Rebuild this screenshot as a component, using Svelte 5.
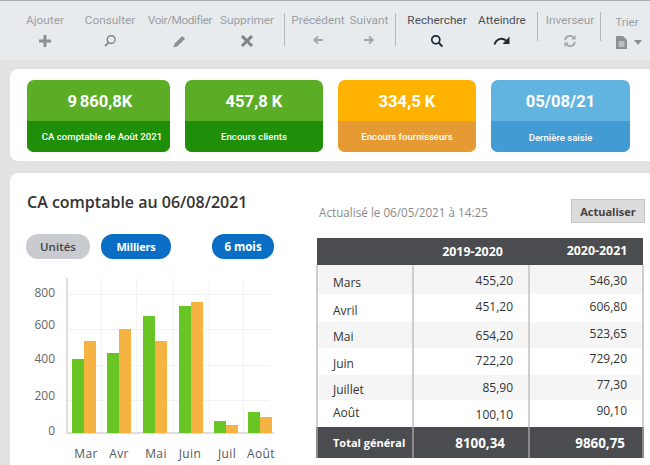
<script>
  const kpis = [
    { value: '9 860,8K', label: 'CA comptable de Août 2021', tone: 'green first' },
    { value: '457,8 K', label: 'Encours clients', tone: 'green' },
    { value: '334,5 K', label: 'Encours fournisseurs', tone: 'orange' },
    { value: '05/08/21', label: 'Dernière saisie', tone: 'blue' }
  ];
  // d = vertical drift of each cell's text within its row, in px
  const rows = [
    { c: ['Mars', '455,20', '546,30'], d: [3, 1, 1] },
    { c: ['Avril', '451,20', '606,80'], d: [2, -2, -2] },
    { c: ['Mai', '654,20', '523,65'], d: [1, 0, -2] },
    { c: ['Juin', '722,20', '729,20'], d: [1.5, -1.5, -3.5] },
    { c: ['Juillet', '85,90', '77,30'], d: [1.5, -0.5, -3.5] },
    { c: ['Août', '100,10', '90,10'], d: [-1.5, 0.5, -3.5] }
  ];
  const drift = (d) => (d >= 0 ? `padding-top:${d * 2}px` : `padding-bottom:${-d * 2}px`);
  const yAxis = [
    { t: '800', y: 294, ly: 297 }, { t: '600', y: 329, ly: 329 }, { t: '400', y: 365, ly: 363 }, { t: '200', y: 400, ly: 400 }, { t: '0', y: 433, ly: 435 }
  ];
  const vGrid = [101, 136, 173, 209, 243];
  const base = 433;
  const bars = [
    { m: 'Mar', lx: 86, x: 72, a: 359, b: 341 },
    { m: 'Avr', lx: 119, x: 107, a: 353, b: 329 },
    { m: 'Mai', lx: 156, x: 143, a: 316, b: 341 },
    { m: 'Juin', lx: 190, x: 179, a: 306, b: 302 },
    { m: 'Juil', lx: 227, x: 214, a: 421, b: 425 },
    { m: 'Août', lx: 261, x: 248, a: 412, b: 417 }
  ];
</script>

<div class="page">
  <header class="toolbar">
    <div class="tool off"><span>Ajouter</span>
      <svg viewBox="0 0 14 14" width="14" height="14"><path d="M7 1v12M1 7h12" stroke="#8b9094" stroke-width="3"/></svg></div>
    <div class="tool off"><span>Consulter</span>
      <svg viewBox="0 0 14 14" width="14" height="14"><circle cx="8.2" cy="5.6" r="3.9" fill="none" stroke="#7e8388" stroke-width="1.4"/><path d="M5.4 8.6L2 12.2" stroke="#7e8388" stroke-width="1.8"/></svg></div>
    <div class="tool off narrow"><span>Voir/Modifier</span>
      <svg viewBox="0 0 14 14" width="14" height="14"><path d="M0.5 13.5l1.2-4 7.6-7.6 2.8 2.8-7.6 7.6z" fill="#8b9094"/></svg></div>
    <div class="tool off"><span>Supprimer</span>
      <svg viewBox="0 0 14 14" width="14" height="14"><path d="M2 2l10 10M12 2L2 12" stroke="#7e8388" stroke-width="3"/></svg></div>
    <i class="sep tall"></i>
    <div class="tool off"><span>Précédent</span>
      <svg viewBox="0 0 12 12" width="12" height="12"><path d="M11 6H3.5M6 2.5L2.2 6 6 9.5" fill="none" stroke="#a2a6aa" stroke-width="1.8"/></svg></div>
    <div class="tool off"><span>Suivant</span>
      <svg viewBox="0 0 12 12" width="12" height="12"><path d="M1 6h7.5M6 2.5L9.8 6 6 9.5" fill="none" stroke="#a2a6aa" stroke-width="1.8"/></svg></div>
    <i class="sep tall"></i>
    <div class="tool on"><span>Rechercher</span>
      <svg viewBox="0 0 14 14" width="14" height="14"><circle cx="5.8" cy="5.8" r="4" fill="none" stroke="#1f2a38" stroke-width="1.7"/><path d="M8.8 8.8l3.6 3.8" stroke="#1f2a38" stroke-width="2"/></svg></div>
    <div class="tool on"><span>Atteindre</span>
      <svg viewBox="0 0 18 12" width="18" height="12"><path d="M1.5 10.5C3 5 9 3 13 6.5" fill="none" stroke="#1f2a38" stroke-width="2"/><path d="M16.5 2.5v7.5h-7z" fill="#1f2a38"/></svg></div>
    <i class="sep mid"></i>
    <div class="tool off"><span>Inverseur</span>
      <svg viewBox="0 0 14 14" width="14" height="14"><path d="M2 6a5 5 0 0 1 8.6-2.4M12 8a5 5 0 0 1-8.6 2.4" fill="none" stroke="#a2a6aa" stroke-width="1.8"/><path d="M12.6 1v4.4H8.2zM1.4 13V8.6h4.4z" fill="#a2a6aa"/></svg></div>
    <i class="sep mid"></i>
    <div class="tool off trier"><span>Trier</span>
      <div class="trier-icons">
        <svg viewBox="0 0 11 13" width="11" height="13"><path d="M0 0h7l4 4v9H0z" fill="#8b9094"/><path d="M2.5 6h6M2.5 8h6M2.5 10h6" stroke="#e8ebee"/></svg>
        <svg viewBox="0 0 8 5" width="8" height="5"><path d="M0 0h8L4 5z" fill="#8b9094"/></svg>
      </div>
    </div>
  </header>

  <section class="panel kpis">
    {#each kpis as k}
      <div class="kpi {k.tone}">
        <div class="value">{k.value}</div>
        <div class="label">{k.label}</div>
      </div>
    {/each}
  </section>

  <section class="panel main">
    <div class="left">
      <h1>CA comptable au 06/08/2021</h1>
      <div class="pills">
        <button class="pill grey">Unités</button>
        <button class="pill blue milliers">Milliers</button>
        <button class="pill blue mois">6 mois</button>
      </div>
      <svg class="chart" width="290" height="194" viewBox="0 271 290 194">
        {#each yAxis as g}
          <line x1="67" x2="270" y1={g.y + 0.5} y2={g.y + 0.5} class="grid" />
          <text x="55" y={g.ly} text-anchor="end" class="tick">{g.t}</text>
        {/each}
        {#each vGrid as x}
          <line x1={x + 0.5} x2={x + 0.5} y1="278" y2="433" class="grid" />
        {/each}
        <line x1="67" x2="67" y1="278" y2="433" class="axis" stroke-width="2" />
        <line x1="66" x2="274" y1="433" y2="433" class="axis" stroke-width="2" />
        {#each bars as b}
          <rect x={b.x} y={b.a} width="12" height={base - b.a} fill="#68c524" />
          <rect x={b.x + 12} y={b.b} width="12" height={base - b.b} fill="#f5b441" />
          <text x={b.lx} y="458" text-anchor="middle" class="tick month">{b.m}</text>
        {/each}
      </svg>
    </div>

    <div class="right">
      <div class="status">
        <span>Actualisé le 06/05/2021 à 14:25</span>
        <button class="refresh">Actualiser</button>
      </div>
      <table>
        <thead>
          <tr><th></th><th class="h1">2019-2020</th><th class="h2">2020-2021</th></tr>
        </thead>
        <tbody>
          {#each rows as r}
            <tr>
              <td class="name" style={drift(r.d[0])}>{r.c[0]}</td>
              <td class="num" style={drift(r.d[1])}>{r.c[1]}</td>
              <td class="num" style={drift(r.d[2])}>{r.c[2]}</td>
            </tr>
          {/each}
        </tbody>
        <tfoot>
          <tr><td class="name">Total général</td><td class="t1">8100,34</td><td class="t2">9860,75</td></tr>
        </tfoot>
      </table>
    </div>
  </section>
</div>

<style>
  :global(body) {
    margin: 0;
    background: #e2e2e2;
    overflow: hidden;
  }
  .page {
    width: 650px;
    height: 465px;
    overflow: hidden;
    font-family: "Open Sans", "Liberation Sans", sans-serif;
  }
  .toolbar {
    box-sizing: border-box;
    height: 60px;
    background: #e8ebee;
    border-top: 1px solid #a9acae;
    padding: 11px 0 0 15px;
    display: grid;
    grid-template-columns: 60px 70px 70px 64px 11px 56px 46px 6px 78px 52px 18px 48px 12px 42px;
    align-items: start;
    font-family: Roboto, "Liberation Sans", sans-serif;
  }
  .tool {
    display: flex;
    flex-direction: column;
    align-items: center;
    gap: 6px;
    font-size: 11.8px;
    line-height: 16px;
    white-space: nowrap;
  }
  .narrow { letter-spacing: -0.4px; }
  .tool svg { display: block; }
  .off { color: #9a9ea2; }
  .on { color: #4a5058; }
  .trier { margin-top: 2px; }
  .trier-icons {
    display: flex;
    align-items: center;
    gap: 7px;
    margin-left: 4px;
  }
  .sep {
    justify-self: center;
    width: 1px;
    background: #b4b8bb;
    display: block;
  }
  .tall { height: 33px; margin-top: 1px; }
  .mid { height: 29px; }
  .panel { background: #fff; margin-left: 10px; }
  .kpis {
    box-sizing: border-box;
    height: 92px;
    margin-top: 9px;
    border-radius: 8px 0 0 8px;
    padding: 11px 0 0 17px;
    display: grid;
    grid-template-columns: 143px 138px 138px 139px;
    column-gap: 15px;
    align-content: start;
  }
  .kpi {
    height: 72px;
    border-radius: 7px;
    overflow: hidden;
    color: #fff;
    text-align: center;
    display: grid;
    grid-template-rows: 41px 31px;
  }
  .value {
    box-sizing: border-box;
    padding-top: 3px;
    font-family: Roboto, sans-serif;
    font-weight: 700;
    font-size: 16.6px;
    line-height: 38px;
    white-space: nowrap;
  }
  .first .value { word-spacing: -1.5px; padding-left: 3px; }
  .label {
    font-family: Roboto, sans-serif;
    font-weight: 500;
    font-size: 9.6px;
    line-height: 31px;
  }
  .first .label { padding-left: 7px; }
  .kpi.green { background: #5bad25; }
  .kpi.green .label { background: #1f8f0a; }
  .kpi.orange { background: #ffb300; }
  .kpi.orange .label { background: #e59a33; }
  .kpi.blue { background: #62b4e0; }
  .kpi.blue .label { background: #429bd3; line-height: 33px; }
  .main {
    box-sizing: border-box;
    height: 292px;
    margin-top: 12px;
    border-radius: 8px 0 0 0;
    display: flex;
  }
  .left { width: 290px; margin-left: -10px; padding-left: 10px; box-sizing: content-box; flex: none; }
  h1 {
    margin: 18px 0 0 17px;
    font-family: "Open Sans", sans-serif;
    font-size: 16px;
    line-height: 22px;
    font-weight: 600;
    color: #333;
    white-space: nowrap;
  }
  .pills {
    display: flex;
    margin: 21px 0 0 16px;
  }
  .pill {
    height: 25px;
    border: none;
    border-radius: 12px;
    font-family: "Open Sans", sans-serif;
    font-size: 11.5px;
    font-weight: 600;
    padding: 0;
  }
  .pill.grey { width: 64px; background: #c9cbd0; color: #444; }
  .pill.blue { background: #0a6fc4; color: #fff; font-weight: 700; }
  .pill.milliers { width: 70px; margin-left: 11px; font-size: 11px; letter-spacing: -0.2px; }
  .mois { width: 62px; margin-left: 41px; }
  .chart { display: block; margin: 12px 0 0 -10px; }
  .grid { stroke: #f2f2f2; stroke-width: 1; }
  .axis { stroke: #dedede; }
  .tick {
    font-family: "Open Sans", sans-serif;
    font-size: 12px;
    fill: #666;
  }
  .month { letter-spacing: 0.4px; fill: #555; }
  .right {
    width: 328px;
    margin-left: 17px;
    flex: none;
  }
  .status {
    display: flex;
    justify-content: space-between;
    align-items: center;
    height: 24px;
    margin: 26px 0 15px 2px;
    font-size: 11.7px;
    color: #8a8a8a;
  }
  .status span { padding-top: 2px; }
  .refresh {
    width: 74px;
    height: 24px;
    padding: 0;
    background: #dcdcdc;
    border: 1px solid #c6c6c6;
    font-family: "Open Sans", sans-serif;
    font-size: 11px;
    font-weight: 700;
    color: #444;
  }
  table {
    width: 328px;
    margin-left: -1px;
    table-layout: fixed;
    border-collapse: collapse;
    font-size: 12px;
    color: #333;
  }
  th, td { box-sizing: border-box; }
  th:nth-child(1) { width: 96px; }
  th:nth-child(2) { width: 116px; }
  th {
    height: 27px;
    padding: 0;
    background: #4b4c50;
    color: #fff;
    font-weight: 700;
    font-size: 12.4px;
  }
  .h1 { padding-left: 3px; }
  .h2 { padding: 0 0 3px 22px; }
  td { padding: 0; border: 1px solid #cfcfcf; border-width: 0 2px; }
  tbody tr { height: 27px; }
  tbody tr:nth-child(odd) { background: #f5f5f5; }
  tbody tr:nth-child(1) { height: 29px; }
  tbody tr:nth-child(2) { height: 28px; }
  tbody tr:nth-child(3) { height: 26px; }
  tbody tr:nth-child(4) { height: 27px; }
  tbody tr:nth-child(5) { height: 25px; }
  .name { padding-left: 15px; }
  .num { text-align: right; padding-right: 15px; }
  tfoot tr { height: 31px; }
  tfoot td {
    background: #4b4c50;
    color: #fff;
    font-weight: 700;
    border-color: #8a8a8a;
    font-size: 13.4px;
    text-align: right;
  }
  tfoot .name { font-size: 11px; padding-left: 15px; white-space: nowrap; text-align: left; }
  .t1 { padding-right: 23px; }
  .t2 { padding-right: 17px; }
</style>
